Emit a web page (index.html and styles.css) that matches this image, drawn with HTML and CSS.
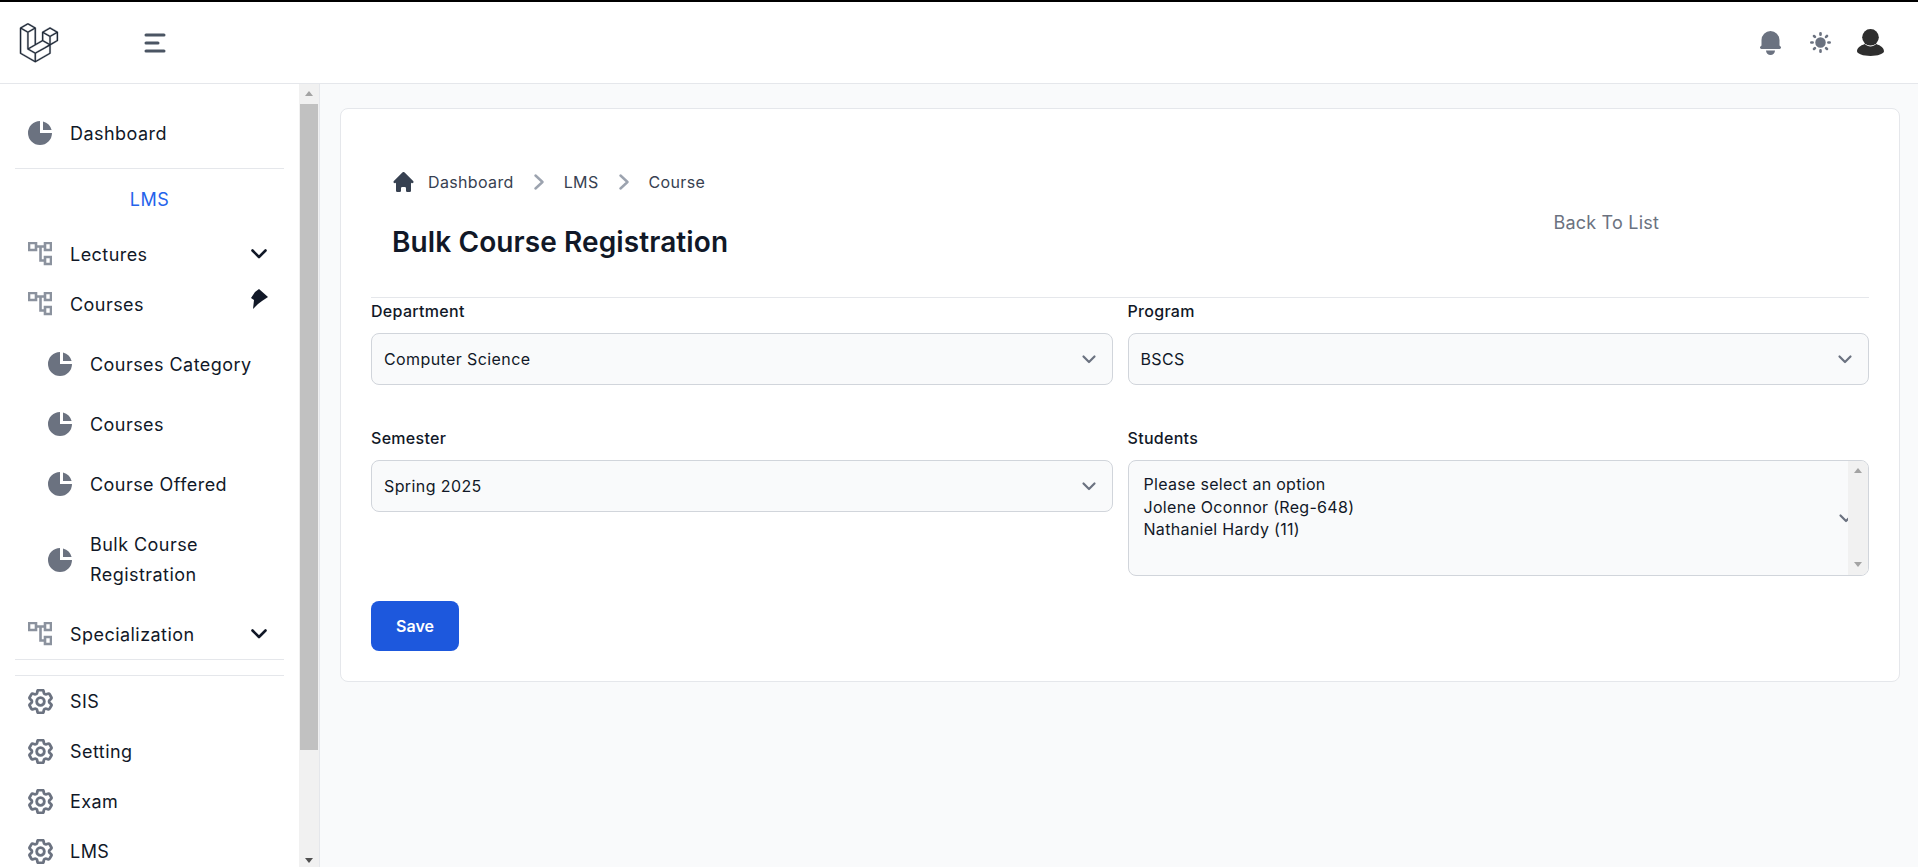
FILE: index.html
```html
<!DOCTYPE html>
<html lang="en">
<head>
    <meta charset="UTF-8">
    <meta name="viewport" content="width=device-width, initial-scale=1.0">
    <title>Bulk Course Registration</title>
    <link rel="stylesheet" href="styles.css">
</head>
<body>
    <svg class="defs" aria-hidden="true">
        <symbol id="pie" viewBox="2 2 16 16"><path d="M2 10a8 8 0 018-8v8h8a8 8 0 11-16 0z"/><path d="M12 2.252A8.014 8.014 0 0117.748 8H12V2.252z"/></symbol>
        <symbol id="flow" viewBox="0 0 24 24"><path d="M1 1h7v7H1zM17 1h6v7h-6zM17 15h6v7h-6zM8 4.500h9M12.500 4.500v14H17" fill="none" stroke="currentColor" stroke-width="2.600"/></symbol>
        <symbol id="gear" viewBox="2.200 2.200 19.600 19.600"><path fill="none" stroke="currentColor" stroke-width="2.200" stroke-linejoin="round" d="M9.594 3.940c.09-.542.56-.94 1.110-.94h2.593c.55 0 1.020.398 1.110.94l.213 1.281c.063.374.313.686.645.870.074.04.147.083.22.127.325.196.72.257 1.075.124l1.217-.456a1.125 1.125 0 0 1 1.370.49l1.296 2.247a1.125 1.125 0 0 1-.26 1.431l-1.003.827c-.293.241-.438.613-.43.992a7.723 7.723 0 0 1 0 .255c-.008.378.137.75.43.991l1.004.827c.424.35.534.955.26 1.430l-1.298 2.247a1.125 1.125 0 0 1-1.369.491l-1.217-.456c-.355-.133-.75-.072-1.076.124a6.470 6.470 0 0 1-.22.128c-.331.183-.581.495-.644.869l-.213 1.281c-.09.543-.56.94-1.110.94h-2.594c-.55 0-1.019-.398-1.110-.94l-.213-1.281c-.062-.374-.312-.686-.644-.87a6.520 6.520 0 0 1-.22-.127c-.325-.196-.72-.257-1.076-.124l-1.217.456a1.125 1.125 0 0 1-1.369-.49l-1.297-2.247a1.125 1.125 0 0 1 .26-1.431l1.004-.827c.292-.24.437-.613.43-.991a6.932 6.932 0 0 1 0-.255c.007-.38-.138-.751-.43-.992l-1.004-.827a1.125 1.125 0 0 1-.26-1.430l1.297-2.247a1.125 1.125 0 0 1 1.370-.491l1.216.456c.356.133.751.072 1.076-.124.072-.044.146-.086.22-.128.332-.183.582-.495.644-.869l.214-1.280Z"/><path fill="none" stroke="currentColor" stroke-width="2.200" d="M15 12a3 3 0 1 1-6 0 3 3 0 0 1 6 0Z"/></symbol>
        <symbol id="down" viewBox="0 0 16 10"><path d="M1.500 1.500 8 8l6.500-6.500" fill="none" stroke="currentColor" stroke-width="2.600" stroke-linecap="round" stroke-linejoin="round"/></symbol>
        <symbol id="crumb" viewBox="0 0 10 16"><path d="M1.500 1.500 8.500 8l-7 6.500" fill="none" stroke="currentColor" stroke-width="2.400" stroke-linecap="round" stroke-linejoin="round"/></symbol>
    </svg>

    <header class="topbar">
        <div class="topbar-left">
            <svg class="logo" viewBox="0 0 62 65"><path d="M61.8548 14.6253C61.8778 14.7102 61.8895 14.7978 61.8897 14.8858V28.5615C61.8898 28.737 61.8434 28.9095 61.7554 29.0614C61.6675 29.2132 61.5409 29.3392 61.3887 29.4265L49.9104 36.0351V49.1337C49.9104 49.4902 49.7209 49.8192 49.4118 49.9987L25.4519 63.7916C25.3971 63.8227 25.3372 63.8427 25.2774 63.8639C25.255 63.8714 25.2338 63.8851 25.2101 63.8913C25.0426 63.9354 24.8666 63.9354 24.6991 63.8913C24.6716 63.8838 24.6467 63.8689 24.6205 63.8589C24.5657 63.8389 24.5084 63.8215 24.456 63.7916L0.501061 49.9987C0.348882 49.9113 0.222437 49.7853 0.134469 49.6334C0.0465019 49.4816 0.000120578 49.3092 0 49.1337L0 8.10652C0 8.01678 0.0124642 7.92953 0.0348998 7.84477C0.0423783 7.8161 0.0598282 7.78993 0.0697995 7.76126C0.0884958 7.70891 0.105946 7.65531 0.133367 7.6067C0.152063 7.5743 0.179485 7.54812 0.20192 7.51821C0.230588 7.47832 0.256763 7.43719 0.290416 7.40229C0.319084 7.37362 0.356476 7.35243 0.388883 7.32751C0.425029 7.29759 0.457436 7.26518 0.498568 7.2415L12.4779 0.345059C12.6296 0.257786 12.8015 0.211853 12.9765 0.211853C13.1515 0.211853 13.3234 0.257786 13.475 0.345059L25.4531 7.2415H25.4556C25.4955 7.26643 25.5292 7.29759 25.5653 7.32626C25.5977 7.35119 25.6339 7.37362 25.6625 7.40104C25.6974 7.43719 25.7224 7.47832 25.7523 7.51821C25.7735 7.54812 25.8021 7.5743 25.8196 7.6067C25.8483 7.65656 25.8645 7.70891 25.8844 7.76126C25.8944 7.78993 25.9118 7.8161 25.9193 7.84602C25.9423 7.93096 25.954 8.01853 25.9542 8.10652V33.7317L35.9355 27.9844V14.8846C35.9355 14.7973 35.948 14.7088 35.9704 14.6253C35.9792 14.5954 35.9954 14.5692 36.0053 14.5405C36.0253 14.4882 36.0427 14.4346 36.0702 14.386C36.0888 14.3536 36.1163 14.3274 36.1375 14.2975C36.1674 14.2576 36.1923 14.2165 36.2272 14.1816C36.2559 14.1529 36.292 14.1317 36.3244 14.1068C36.3618 14.0769 36.3942 14.0445 36.4341 14.0208L48.4147 7.12434C48.5663 7.03694 48.7383 6.99094 48.9133 6.99094C49.0883 6.99094 49.2602 7.03694 49.4118 7.12434L61.3899 14.0208C61.4323 14.0457 61.4647 14.0769 61.5021 14.1055C61.5333 14.1305 61.5694 14.1529 61.5981 14.1803C61.633 14.2165 61.6579 14.2576 61.6878 14.2975C61.7103 14.3274 61.7377 14.3536 61.7551 14.386C61.7838 14.4346 61.8 14.4882 61.8199 14.5405C61.8312 14.5692 61.8474 14.5954 61.8548 14.6253ZM59.893 27.9844V16.6121L55.7013 19.0252L49.9104 22.3593V33.7317L59.8942 27.9844H59.893ZM47.9149 48.5566V37.1768L42.2187 40.4299L25.953 49.7133V61.2003L47.9149 48.5566ZM1.99677 9.83281V48.5566L23.9562 61.199V49.7145L12.4841 43.2219L12.4804 43.2194L12.4754 43.2169C12.4368 43.1945 12.4044 43.1621 12.3682 43.1347C12.3371 43.1097 12.3009 43.0898 12.2735 43.0624L12.271 43.0586C12.2386 43.0275 12.2162 42.9888 12.1887 42.9539C12.1638 42.9203 12.1339 42.8916 12.114 42.8567L12.1127 42.853C12.0903 42.8156 12.0766 42.7707 12.0604 42.7283C12.0442 42.6909 12.023 42.656 12.013 42.6161C12.0005 42.5688 11.998 42.5177 11.9931 42.4691C11.9881 42.4317 11.9781 42.3943 11.9781 42.3569V15.5801L6.18848 12.2446L1.99677 9.83281ZM12.9777 2.36177L2.99764 8.10652L12.9752 13.8513L22.9541 8.10527L12.9752 2.36177H12.9777ZM18.1678 38.2138L23.9574 34.8809V9.83281L19.7657 12.2459L13.9749 15.5801V40.6281L18.1678 38.2138ZM48.9133 9.14105L38.9344 14.8858L48.9133 20.6305L58.8909 14.8846L48.9133 9.14105ZM47.9149 22.3593L42.124 19.0252L37.9323 16.6121V27.9844L43.7219 31.3174L47.9149 33.7317V22.3593ZM24.9533 47.987L39.59 39.631L46.9065 35.4555L36.9352 29.7145L25.4544 36.3242L14.9907 42.3482L24.9533 47.987Z"/></svg>
            <svg class="burger" viewBox="0 0 22 20"><path d="M2 2h18M2 10h12M2 18h18" fill="none" stroke="currentColor" stroke-width="3" stroke-linecap="round"/></svg>
        </div>
        <div class="topbar-right">
            <svg class="bell" viewBox="3 2 14 16"><path d="M10 2a6 6 0 00-6 6v3.586l-.707.707A1 1 0 004 14h12a1 1 0 00.707-1.707L16 11.586V8a6 6 0 00-6-6zM10 18a3 3 0 01-3-3h6a3 3 0 01-3 3z"/></svg>
            <svg class="sun" viewBox="2 2 16 16"><path d="M10 2a1 1 0 011 1v1a1 1 0 11-2 0V3a1 1 0 011-1zm4 8a4 4 0 11-8 0 4 4 0 018 0zm-.464 4.950l.707.707a1 1 0 001.414-1.414l-.707-.707a1 1 0 00-1.414 1.414zm2.120-10.607a1 1 0 010 1.414l-.706.707a1 1 0 11-1.414-1.414l.707-.707a1 1 0 011.414 0zM17 11a1 1 0 100-2h-1a1 1 0 100 2h1zm-7 4a1 1 0 011 1v1a1 1 0 11-2 0v-1a1 1 0 011-1zM5.050 6.464A1 1 0 106.465 5.050l-.708-.707a1 1 0 00-1.414 1.414l.707.707zm1.414 8.486l-.707.707a1 1 0 01-1.414-1.414l.707-.707a1 1 0 011.414 1.414zM4 11a1 1 0 100-2H3a1 1 0 000 2h1z"/></svg>
            <svg class="user" viewBox="0 0 26 26"><circle cx="13" cy="8" r="8"/><path d="M7.500 14.500C9 16 11 16.800 13 16.800s4-.8 5.500-2.300C23 16 26 18.500 26 21.500c0 2.500-6 4.500-13 4.500S0 24 0 21.500c0-3 3-5.500 7.500-7z"/></svg>
        </div>
    </header>

    <div class="layout">
        <aside class="sidebar">
            <div class="side-scroll">
                <a class="side-item"><svg class="side-icon pie"><use href="#pie"/></svg>Dashboard</a>
                <hr class="side-line">
                <div class="side-title">LMS</div>
                <a class="side-item"><svg class="side-icon flow"><use href="#flow"/></svg>Lectures<svg class="side-arrow"><use href="#down"/></svg></a>
                <a class="side-item"><svg class="side-icon flow"><use href="#flow"/></svg>Courses
                    <svg class="side-pin" viewBox="0 0 18 22"><path d="M8 1 17 9 11 13 7 16 2 21 3 12 0 10 4 4z"/></svg>
                </a>
                <ul class="side-sub">
                    <li><svg class="side-icon pie"><use href="#pie"/></svg>Courses Category</li>
                    <li><svg class="side-icon pie"><use href="#pie"/></svg>Courses</li>
                    <li><svg class="side-icon pie"><use href="#pie"/></svg>Course Offered</li>
                    <li class="tall"><svg class="side-icon pie"><use href="#pie"/></svg><span>Bulk Course<br>Registration</span></li>
                </ul>
                <a class="side-item"><svg class="side-icon flow"><use href="#flow"/></svg>Specialization<svg class="side-arrow"><use href="#down"/></svg></a>
                <hr class="side-line flush">
                <hr class="side-line second">
                <a class="side-item"><svg class="side-icon gear"><use href="#gear"/></svg>SIS</a>
                <a class="side-item"><svg class="side-icon gear"><use href="#gear"/></svg>Setting</a>
                <a class="side-item"><svg class="side-icon gear"><use href="#gear"/></svg>Exam</a>
                <a class="side-item"><svg class="side-icon gear"><use href="#gear"/></svg>LMS</a>
            </div>
            <div class="side-bar">
                <span class="tri up"></span>
                <div class="side-thumb"></div>
                <span class="tri dn"></span>
            </div>
        </aside>

        <main class="content">
            <section class="card">
                <div class="card-head">
                    <div>
                        <nav class="crumbs">
                            <svg class="home" viewBox="2 2 16 16"><path d="M10.707 2.293a1 1 0 00-1.414 0l-7 7a1 1 0 001.414 1.414L4 10.414V17a1 1 0 001 1h2a1 1 0 001-1v-2a1 1 0 011-1h2a1 1 0 011 1v2a1 1 0 001 1h2a1 1 0 001-1v-6.586l.293.293a1 1 0 001.414-1.414l-7-7z"/></svg>
                            <span>Dashboard</span>
                            <svg class="crumb-sep"><use href="#crumb"/></svg>
                            <span>LMS</span>
                            <svg class="crumb-sep"><use href="#crumb"/></svg>
                            <span>Course</span>
                        </nav>
                        <h1>Bulk Course Registration</h1>
                    </div>
                    <a class="back-link">Back To List</a>
                </div>
                <form class="reg-form">
                    <div class="field">
                        <label for="department">Department</label>
                        <div class="select-box">
                            <select id="department"><option>Computer Science</option></select>
                        </div>
                    </div>
                    <div class="field">
                        <label for="program">Program</label>
                        <div class="select-box">
                            <select id="program"><option>BSCS</option></select>
                        </div>
                    </div>
                    <div class="field">
                        <label for="semester">Semester</label>
                        <div class="select-box">
                            <select id="semester"><option>Spring 2025</option></select>
                        </div>
                    </div>
                    <div class="field">
                        <label>Students</label>
                        <div class="multi-box">
                            <div class="multi-list">
                                <div>Please select an option</div>
                                <div>Jolene Oconnor (Reg-648)</div>
                                <div>Nathaniel Hardy (11)</div>
                            </div>
                            <div class="multi-bar"><span class="tri up"></span><span class="tri dn"></span></div>
                        </div>
                    </div>
                    <button type="button" class="save-btn">Save</button>
                </form>
            </section>
        </main>
    </div>
</body>
</html>
```

FILE: styles.css
```css
* {
    box-sizing: border-box;
}
html, body {
    height: 100%;
}
body {
    margin: 0;
    display: flex;
    flex-direction: column;
    overflow: hidden;
    border-top: 2px solid #000;
    background: #f9fafb;
    color: #111827;
    font-family: Inter, "Noto Sans", sans-serif;
}
.defs {
    display: none;
}
svg {
    fill: currentColor;
    flex: none;
}

.topbar {
    height: 82px;
    flex: none;
    display: flex;
    justify-content: space-between;
    align-items: center;
    background: #fff;
    border-bottom: 1px solid #e5e7eb;
    padding: 0 34px 0 19px;
}
.topbar-left, .topbar-right {
    display: flex;
    align-items: center;
}
.logo {
    width: 40px;
    height: 40px;
    color: #1f2937;
    stroke: currentColor;
    stroke-width: .5;
}
.burger {
    width: 22px;
    height: 20px;
    margin-left: 85px;
    color: #4b5563;
}
.bell {
    width: 21px;
    height: 24px;
    color: #6b7280;
}
.sun {
    width: 21px;
    height: 21px;
    margin-left: 29px;
    color: #6b7280;
}
.user {
    width: 27px;
    height: 27px;
    margin-left: 26px;
    color: #2e2e2e;
}

.layout {
    flex: 1;
    display: flex;
    min-height: 0;
}
.sidebar {
    width: 320px;
    flex: none;
    display: flex;
    background: #fff;
    border-right: 1px solid #e5e7eb;
    overflow: hidden;
}
.side-scroll {
    flex: 1;
    padding: 24px 15px 0;
    overflow: hidden;
    font-size: 18px;
    letter-spacing: .45px;
}
.side-item {
    height: 50px;
    display: flex;
    align-items: center;
    padding: 0 17px 0 13px;
    color: #111827;
}
.side-icon {
    width: 24px;
    height: 24px;
    margin-right: 18px;
}
.pie {
    color: #6b7280;
}
.flow {
    color: #8b929e;
}
.gear {
    width: 25px;
    height: 25px;
    margin-right: 17px;
    color: #6b7280;
}
.side-arrow {
    width: 16px;
    height: 10px;
    margin-left: auto;
    color: #111827;
}
.side-pin {
    width: 18px;
    height: 22px;
    margin: 0 -2px 10px auto;
    color: #111827;
}
.side-line {
    margin: 10px 0 0;
    border: 0;
    border-top: 1px solid #e5e7eb;
}
.side-line.flush {
    margin: 0;
}
.side-line.second {
    margin: 15px 0 0;
}
.side-title {
    height: 60px;
    line-height: 61px;
    text-align: center;
    color: #2563eb;
}
.side-sub {
    list-style: none;
    margin: 5px 0 4px;
    padding: 0;
}
.side-sub li {
    height: 60px;
    display: flex;
    align-items: center;
    padding-left: 33px;
}
.side-sub li.tall {
    height: 91px;
    line-height: 30px;
}
.side-bar {
    width: 20px;
    flex: none;
    display: flex;
    flex-direction: column;
    align-items: center;
    background: #f1f1f1;
    padding: 0 1px;
}
.side-thumb {
    width: 100%;
    height: 646px;
    margin: 8px 0 auto;
    background: #c1c1c1;
}
.tri {
    display: block;
    width: 0;
    height: 0;
    border-left: 4.5px solid transparent;
    border-right: 4.5px solid transparent;
}
.tri.up {
    border-bottom: 5px solid #a3a3a3;
    margin-top: 7px;
}
.tri.dn {
    border-top: 5px solid #505050;
    margin-bottom: 4px;
}

.content {
    flex: 1;
    padding: 24px 18px 0 20px;
}
.card {
    background: #fff;
    border: 1px solid #e5e7eb;
    border-radius: 8px;
    padding: 60px 30px 30px 30px;
}
.card-head {
    display: flex;
    justify-content: space-between;
    height: 129px;
    border-bottom: 1px solid #e5e7eb;
    padding-left: 21px;
}
.crumbs {
    display: flex;
    align-items: center;
    height: 26px;
    font-size: 16px;
    letter-spacing: .35px;
    color: #374151;
}
.home {
    width: 21px;
    height: 20px;
    margin: 0 14px 0 1px;
    color: #374151;
}
.crumb-sep {
    width: 10px;
    height: 16px;
    margin: 0 20px;
    color: #9ca3af;
}
h1 {
    margin: 26px 0 0;
    font-size: 28px;
    line-height: 42px;
    font-weight: 600;
    letter-spacing: .1px;
    color: #111827;
}
.back-link {
    align-self: flex-start;
    margin: 40px 210px 0 0;
    font-size: 18px;
    line-height: 28px;
    letter-spacing: .2px;
    color: #6b7280;
}

.reg-form {
    display: grid;
    grid-template-columns: 1fr 1fr;
    column-gap: 15px;
    row-gap: 40px;
    align-items: start;
}
.field label {
    display: block;
    height: 24px;
    margin: 1px 0 10px;
    font-size: 16px;
    line-height: 24px;
    font-weight: 450;
    letter-spacing: .3px;
    color: #111827;
}
.select-box select {
    display: block;
    width: 100%;
    height: 52px;
    padding: 0 40px 0 12px;
    appearance: none;
    background-color: #f9fafb;
    background-image: url("data:image/svg+xml,%3Csvg xmlns='http://www.w3.org/2000/svg' fill='none' viewBox='0 0 20 20'%3E%3Cpath stroke='%236b7280' stroke-linecap='round' stroke-linejoin='round' stroke-width='2.200' d='m4.500 7.500 5.500 5.500 5.500-5.500'/%3E%3C/svg%3E");
    background-position: right 13px center;
    background-size: 20px 20px;
    background-repeat: no-repeat;
    border: 1px solid #d1d5db;
    border-radius: 8px;
    font: inherit;
    font-size: 16px;
    letter-spacing: .4px;
    color: #111827;
}
.multi-box {
    display: flex;
    height: 116px;
    background-color: #f9fafb;
    background-image: url("data:image/svg+xml,%3Csvg xmlns='http://www.w3.org/2000/svg' fill='none' viewBox='0 0 20 20'%3E%3Cpath stroke='%236b7280' stroke-linecap='round' stroke-linejoin='round' stroke-width='2.200' d='m4.500 7.500 5.500 5.500 5.500-5.500'/%3E%3C/svg%3E");
    background-position: right 12px center;
    background-size: 20px 20px;
    background-repeat: no-repeat;
    border: 1px solid #d1d5db;
    border-radius: 8px;
    overflow: hidden;
}
.multi-list {
    flex: 1;
    padding: 12px 15px;
    font-size: 16px;
    line-height: 22.5px;
    letter-spacing: .3px;
    color: #111827;
}
.multi-bar {
    width: 20px;
    display: flex;
    flex-direction: column;
    justify-content: space-between;
    align-items: center;
    background: #f1f1f1;
}
.multi-bar .tri.dn {
    border-top-color: #a3a3a3;
    margin-bottom: 8px;
}
.save-btn {
    grid-column: 1;
    justify-self: start;
    width: 88px;
    height: 50px;
    margin-top: -15px;
    background: #1d58dd;
    color: #fff;
    border: none;
    border-radius: 8px;
    font: inherit;
    font-size: 16px;
    font-weight: 600;
}
```
